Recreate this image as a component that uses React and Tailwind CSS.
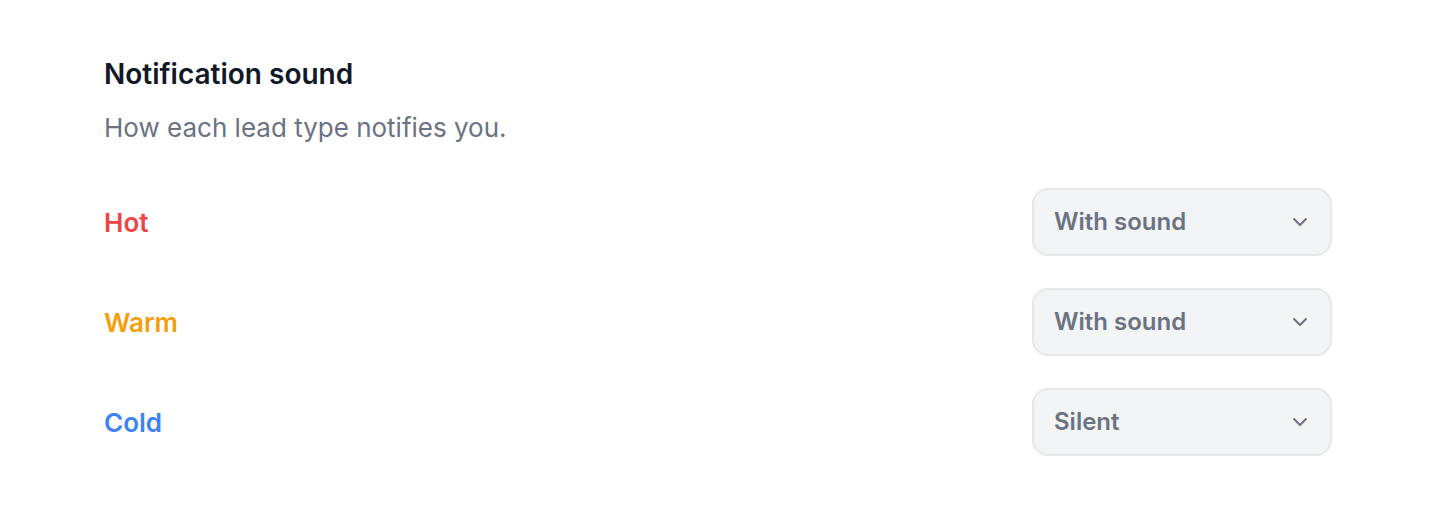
import { ChevronDown } from "lucide-react";

const rows = [
  { label: "Hot", color: "text-[#ef4444]", value: "With sound" },
  { label: "Warm", color: "text-[#f59e0b]", value: "With sound" },
  { label: "Cold", color: "text-[#3b82f6]", value: "Silent" },
];

const SoundSelect = ({ value }) => {
  return (
    <button className="flex h-[68px] w-[300px] items-center justify-between rounded-2xl border-2 border-[#e5e7eb] bg-[#f3f4f6] pl-[20px] pr-[18px] text-left">
      <span className="text-[24px] font-semibold text-[#6b7280]">
        {value}
      </span>
      <ChevronDown size={24} strokeWidth={2} className="text-[#6b7280]" />
    </button>
  );
};

const App = () => {
  return (
    <div
      className="min-h-[524px] bg-white px-[104px] pt-[56px]"
      style={{ fontFamily: "Inter, 'Noto Sans', sans-serif" }}
    >
      <h1 className="text-[28px] font-semibold leading-[36px] text-[#111827]">
        Notification sound
      </h1>

      <p className="mt-[18px] text-[26px] leading-[36px] text-[#6b7280]">
        How each lead type notifies you.
      </p>

      <div className="mt-[42px] flex flex-col gap-[32px]">
        {rows.map((row) => (
          <div
            key={row.label}
            className="flex items-center justify-between"
          >
            <span className={`text-[26px] font-semibold ${row.color}`}>
              {row.label}
            </span>
            <SoundSelect value={row.value} />
          </div>
        ))}
      </div>
    </div>
  );
};

export default App;
